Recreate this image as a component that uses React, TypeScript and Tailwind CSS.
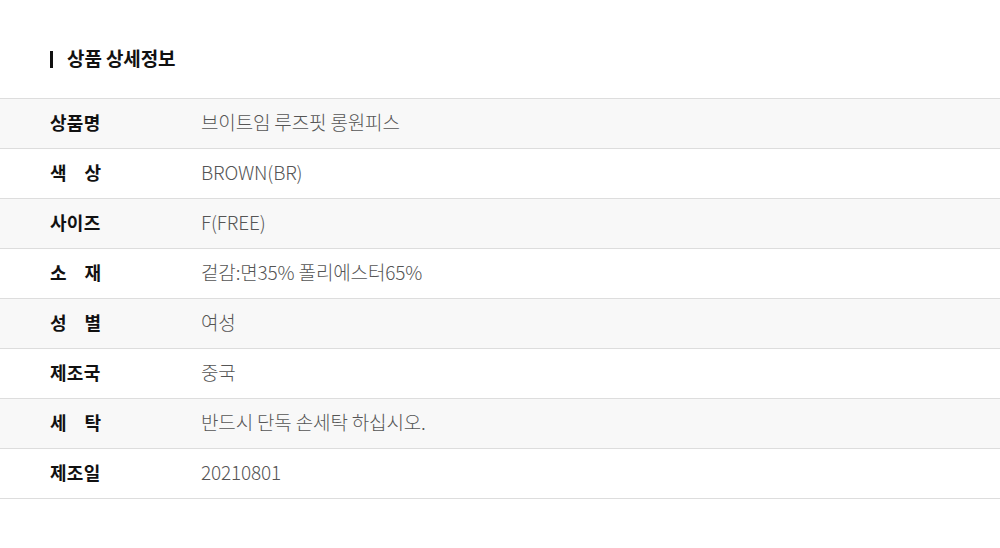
import React from 'react';

const rows: { label: string; value: string; spread?: boolean }[] = [
  { label: '상품명', value: '브이트임 루즈핏 롱원피스' },
  { label: '색상', value: 'BROWN(BR)', spread: true },
  { label: '사이즈', value: 'F(FREE)' },
  { label: '소재', value: '겉감:면35% 폴리에스터65%', spread: true },
  { label: '성별', value: '여성', spread: true },
  { label: '제조국', value: '중국' },
  { label: '세탁', value: '반드시 단독 손세탁 하십시오.', spread: true },
  { label: '제조일', value: '20210801' },
];

export default function App() {
  return (
    <div
      className="w-[1000px] min-h-[548px] bg-white pt-[50px]"
      style={{ fontFamily: '"Noto Sans CJK KR", "Noto Sans", sans-serif' }}
    >
      {/* Section title */}
      <div className="flex items-center gap-[14px] pl-[50px] h-[18px]">
        <span className="block w-[3px] h-[17px] bg-[#111]" />
        <h2 className="text-[19px] font-bold text-[#111] leading-none tracking-[-0.1px] pb-[3px]">
          상품 상세정보
        </h2>
      </div>

      {/* Detail table */}
      <div className="mt-[30px] border-t border-[#dddddd]">
        {rows.map((row, i) => (
          <div
            key={row.label}
            className={`flex items-center h-[50px] pb-[4px] border-b border-[#dddddd] ${
              i % 2 === 0 ? 'bg-[#f8f8f8]' : 'bg-white'
            }`}
          >
            <div className="w-[201px] pl-[50px] shrink-0 leading-none">
              {row.spread ? (
                <div className="flex justify-between w-[51px] text-[18px] font-bold text-[#111]">
                  {row.label.split('').map((c) => (
                    <span key={c}>{c}</span>
                  ))}
                </div>
              ) : (
                <span className="text-[18px] font-bold text-[#111] tracking-[0.3px]">{row.label}</span>
              )}
            </div>
            <div className="text-[19px] font-light leading-none text-[#555] tracking-[-0.15px]">
              {row.value}
            </div>
          </div>
        ))}
      </div>
    </div>
  );
}
